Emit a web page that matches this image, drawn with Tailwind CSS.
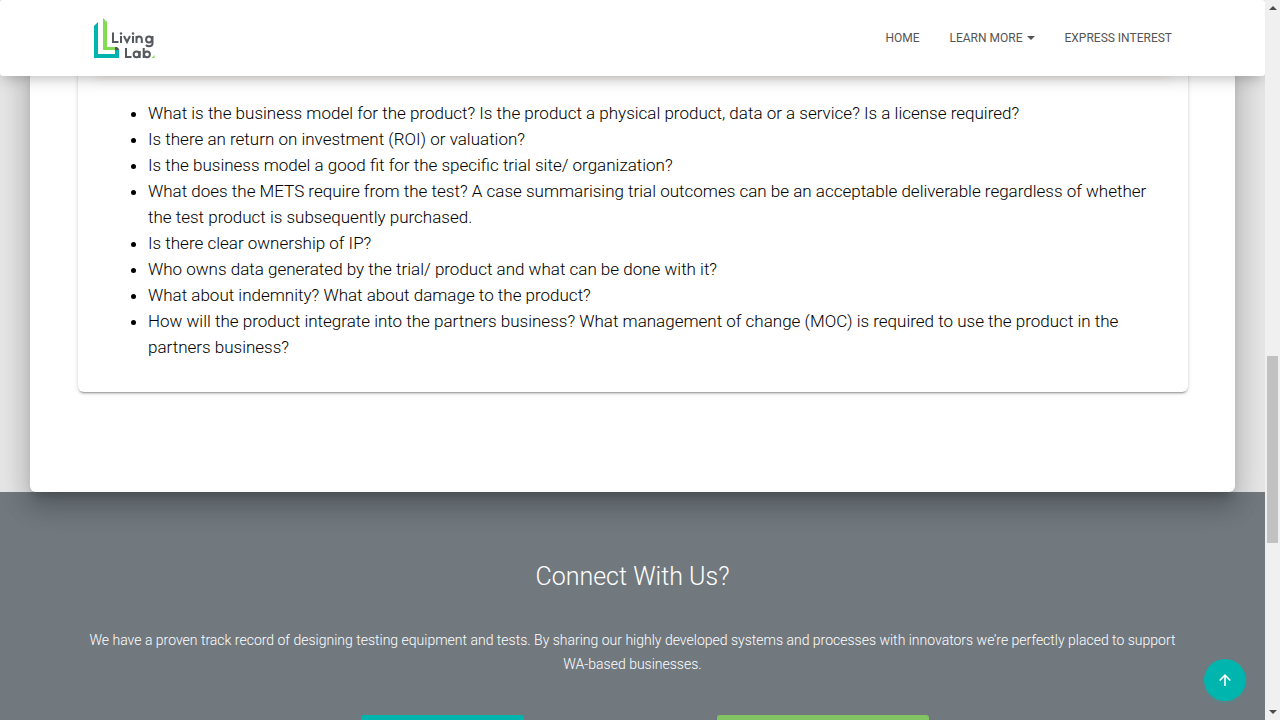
<!DOCTYPE html>
<html lang="en">
<head>
<meta charset="utf-8">
<meta name="viewport" content="width=device-width, initial-scale=1">
<title>Living Lab</title>
<script src="https://cdn.jsdelivr.net/npm/@tailwindcss/browser@4"></script>
</head>
<body class="flex h-screen overflow-hidden bg-[#e5e5e5] font-['Roboto',sans-serif] font-light text-black">
<div class="relative flex h-full min-w-0 flex-1 flex-col overflow-hidden">
  <header class="relative z-20 flex h-[76px] shrink-0 items-center justify-between rounded-[3px] bg-white pr-[93px] pl-[93px] shadow-[0_4px_18px_0_rgba(0,0,0,0.12),0_7px_10px_-5px_rgba(0,0,0,0.15)]">
    <a href="#" aria-label="Living Lab" class="block">
      <svg width="63" height="42" viewBox="0 0 63 42" fill="none">
        <path d="M1 9L5 5V37H22V33L26 32V41H1Z" fill="#00b3ac"/>
        <path d="M10 1L14 5V30H22L25 33H10Z" fill="#82dc50"/>
        <path d="M22 30H24L26 32V33H22Z" fill="#555559"/>
        <g stroke="#55585c" stroke-width="2">
          <path d="M20 15.500V25H25.500M28 19V26M31 19L34 25L37 19M40 19V26M43.500 26V19M43.500 22.500Q43.500 19.500 46 19.500Q48.800 19.500 48.800 22.500V26"/>
          <circle cx="56" cy="22.500" r="2.900"/>
          <path d="M59.500 19V26.500Q59.500 29.200 56 29.200Q54 29.200 53 28"/>
          <path d="M33 31V40H38.500"/>
          <circle cx="43.500" cy="37.300" r="2.900"/>
          <path d="M46.700 34V41M50.700 31V41"/>
          <circle cx="54" cy="37.300" r="2.900"/>
        </g>
        <circle cx="28" cy="16.500" r="1.200" fill="#55585c"/>
        <circle cx="40" cy="16.500" r="1.200" fill="#55585c"/>
        <path d="M58.500 41L61.500 38V41Z" fill="#82dc50"/>
      </svg>
    </a>
    <nav class="flex items-center gap-[30px] text-xs font-normal text-[#555]">
      <a href="#">HOME</a>
      <a href="#" class="flex items-center gap-1">LEARN MORE
        <svg width="8" height="4" viewBox="0 0 8 4"><path d="M0 0H8L4 4Z" fill="#555"/></svg>
      </a>
      <a href="#">EXPRESS INTEREST</a>
    </nav>
  </header>

  <main class="relative z-10 mx-[30px] -mt-5 shrink-0 rounded-b-md bg-white pr-[47px] pb-[100px] pl-12 shadow-[0_16px_24px_2px_rgba(0,0,0,0.14),0_6px_30px_5px_rgba(0,0,0,0.12),0_8px_10px_-5px_rgba(0,0,0,0.2)]">
    <section class="rounded-b-md bg-white px-[15px] pb-8 shadow-[0_2px_2px_0_rgba(0,0,0,0.14),0_3px_1px_-2px_rgba(0,0,0,0.2),0_1px_5px_0_rgba(0,0,0,0.12)]">
      <div class="h-4 rounded-b-[3px] bg-[#b4572a] shadow-[0_12px_20px_-10px_rgba(180,87,42,0.6),0_4px_20px_0_rgba(0,0,0,0.06),0_7px_8px_-5px_rgba(180,87,42,0.2)]"></div>
      <ul class="list-disc pt-7 pr-[15px] pl-[55px] text-[17px] leading-[26px]">
        <li>What is the business model for the product? Is the product a physical product, data or a service? Is a license required?</li>
        <li>Is there an return on investment (ROI) or valuation?</li>
        <li>Is the business model a good fit for the specific trial site/ organization?</li>
        <li>What does the METS require from the test? A case summarising trial outcomes can be an acceptable deliverable regardless of whether the test product is subsequently purchased.</li>
        <li>Is there clear ownership of IP?</li>
        <li>Who owns data generated by the trial/ product and what can be done with it?</li>
        <li>What about indemnity? What about damage to the product?</li>
        <li>How will the product integrate into the partners business? What management of change (MOC) is required to use the product in the partners business?</li>
      </ul>
    </section>
  </main>

  <section class="shrink-0 bg-[#71797f] px-[78px] pt-[67px] pb-16 text-center text-white">
    <h2 class="text-[25px] leading-9">Connect With Us?</h2>
    <p class="mt-[33px] text-sm leading-6">We have a proven track record of designing testing equipment and tests. By sharing our highly developed systems and processes with innovators we’re perfectly placed to support WA-based businesses.</p>
    <div class="mt-[39px] flex justify-center gap-[193px] pl-[25px]">
      <button type="button" aria-label="Contact us" class="h-[41px] w-[163px] rounded-[3px] bg-[#00b5ae] shadow-md"></button>
      <button type="button" aria-label="Express interest" class="h-[41px] w-[212px] rounded-[3px] bg-[#82c463] shadow-md"></button>
    </div>
  </section>

  <button type="button" aria-label="Back to top" class="absolute right-[19px] bottom-[19px] z-20 flex size-[42px] items-center justify-center rounded-full bg-[#00b5ae] shadow-[0_2px_3px_rgba(0,181,174,0.2)]">
    <svg width="12" height="12" viewBox="0 0 12 12" fill="none" stroke="#fff" stroke-width="1.600"><path d="M6 12V1.200M.7 6.500L6 1.200L11.300 6.500"/></svg>
  </button>
</div>

<div aria-hidden="true" class="flex h-full w-[15px] shrink-0 flex-col items-center bg-[#f0f0f0] py-1.5">
  <svg width="8" height="4" viewBox="0 0 8 4"><path d="M0 4H8L4 0Z" fill="#4d4d4d"/></svg>
  <div class="flex w-full flex-1 flex-col px-0.5">
    <div class="grow-[346]"></div>
    <div class="h-[187px] w-[11px] bg-[#c1c1c1]"></div>
    <div class="grow-[167]"></div>
  </div>
  <svg width="8" height="4" viewBox="0 0 8 4"><path d="M0 0H8L4 4Z" fill="#4d4d4d"/></svg>
</div>
</body>
</html>
